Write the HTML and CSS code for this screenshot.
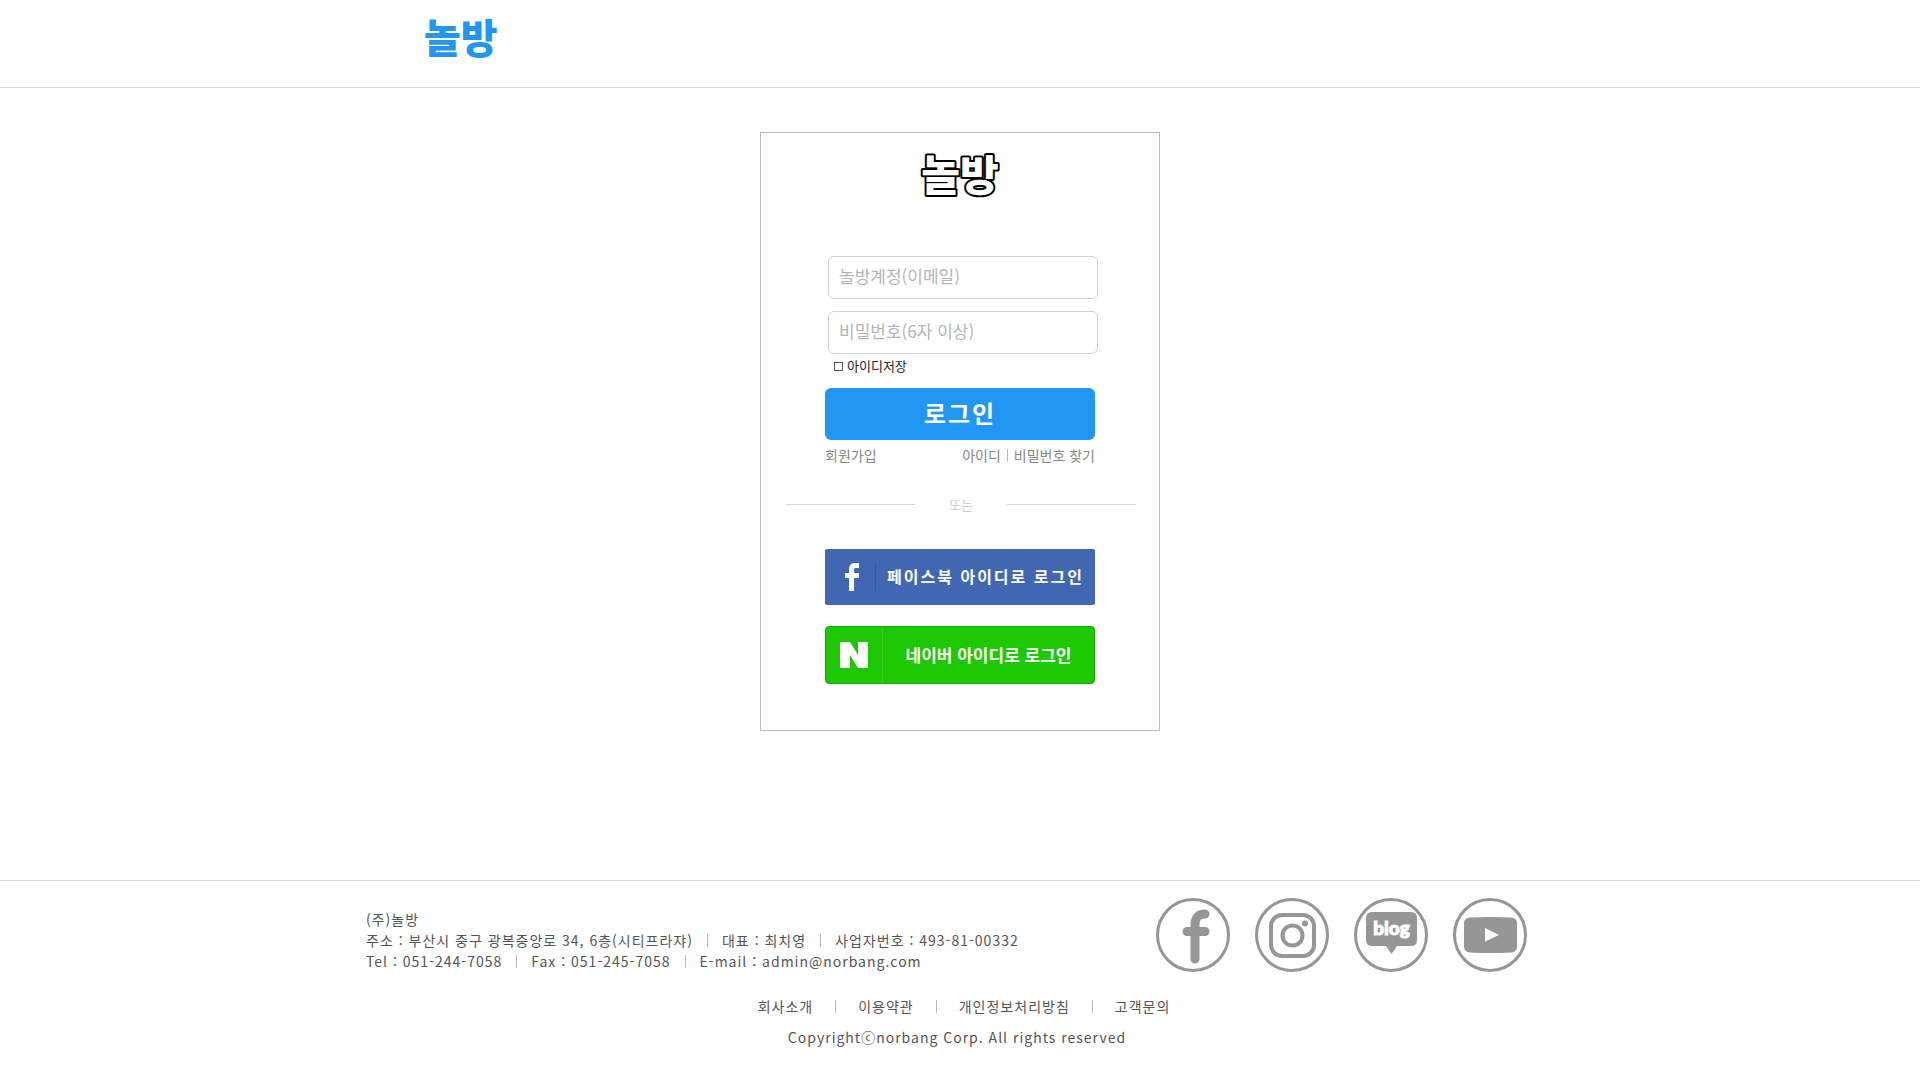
FILE: index.html
```html
<!DOCTYPE html>
<html lang="ko">
<head>
<meta charset="utf-8">
<meta name="viewport" content="width=device-width, initial-scale=1">
<title>놀방 로그인</title>
<link rel="stylesheet" href="styles.css">
</head>
<body>
<header class="header">
  <div class="header-inner"><a class="brand" href="#">놀방</a></div>
</header>

<main class="main">
  <form class="card">
    <h1 class="card-logo"><svg width="100" height="64" viewBox="0 0 100 64"><text x="50" y="46" text-anchor="middle">놀방</text></svg></h1>
    <div class="fields">
      <input class="field" type="email" placeholder="놀방계정(이메일)" aria-label="놀방계정(이메일)">
      <input class="field" type="password" placeholder="비밀번호(6자 이상)" aria-label="비밀번호(6자 이상)">
      <label class="remember"><input class="check" type="checkbox">아이디저장</label>
    </div>
    <button class="login" type="submit">로그인</button>
    <div class="links">
      <a href="#">회원가입</a>
      <span class="find"><a href="#">아이디</a><i class="bar"></i><a href="#">비밀번호 찾기</a></span>
    </div>
    <div class="or">또는</div>
    <button class="social facebook" type="button">
      <span class="facebook-icon"><svg width="14" height="28" viewBox="0 0 14 28" fill="#fff" aria-hidden="true"><path d="M4 28V15H0v-5h4V7c0-5 2-7 6-7h4v5h-3c-1.500 0-2 .6-2 2v3h5v5H9v13z"/></svg></span>
      <span class="facebook-label">페이스북 아이디로 로그인</span>
    </button>
    <button class="social naver" type="button">
      <span class="naver-icon"><svg width="28" height="26" viewBox="0 0 28 26" fill="#fff" aria-hidden="true"><path d="M0 0h10l8 13V0h10v26H18l-8-13v13H0z"/></svg></span>
      <span class="naver-label">네이버 아이디로 로그인</span>
    </button>
  </form>
</main>

<footer class="footer">
  <div class="footer-top">
    <address class="info">
      <div class="info-row">(주)놀방</div>
      <div class="info-row"><span>주소 : 부산시 중구 광복중앙로 34, 6층(시티프라쟈)</span><i class="bar"></i><span>대표 : 최치영</span><i class="bar"></i><span>사업자번호 : 493-81-00332</span></div>
      <div class="info-row"><span>Tel : 051-244-7058</span><i class="bar"></i><span>Fax : 051-245-7058</span><i class="bar"></i><span>E-mail : admin@norbang.com</span></div>
    </address>
    <nav class="sns" aria-label="SNS">
      <a href="#" aria-label="Facebook"><svg viewBox="0 0 74 74"><circle class="ring" cx="37" cy="37" r="35.500"/><path d="M39 61V27c0-7 3-11 10-11M31 33.500h18" fill="none" stroke="#969696" stroke-width="9" stroke-linecap="round"/></svg></a>
      <a href="#" aria-label="Instagram"><svg viewBox="0 0 74 74"><circle class="ring" cx="37" cy="37" r="35.500"/><rect x="16" y="17" width="43" height="41" rx="11" fill="none" stroke="#969696" stroke-width="4"/><circle cx="37.500" cy="37.500" r="10" fill="none" stroke="#969696" stroke-width="4"/><circle cx="50" cy="25.500" r="3" fill="#969696"/></svg></a>
      <a href="#" aria-label="Blog"><svg viewBox="0 0 74 74"><circle class="ring" cx="37" cy="37" r="35.500"/><path d="M18 14h39q6 0 6 6v22q0 6-6 6H43l-5.500 8L32 48H18q-6 0-6-6V20q0-6 6-6z" fill="#969696"/><text class="blog" x="37.500" y="37" text-anchor="middle">blog</text></svg></a>
      <a href="#" aria-label="YouTube"><svg viewBox="0 0 74 74"><circle class="ring" cx="37" cy="37" r="35.500"/><path d="M17 19.500q20-1 41 0 6 .5 6 6v23q0 5.500-6 6-21 1-41 0-6-.5-6-6v-23q0-5.500 6-6z" fill="#969696"/><path d="M32 30v13.500L46 37z" fill="#fff"/></svg></a>
    </nav>
  </div>
  <nav class="menu">
    <a href="#">회사소개</a><i class="bar"></i><a href="#">이용약관</a><i class="bar"></i><a href="#">개인정보처리방침</a><i class="bar"></i><a href="#">고객문의</a>
  </nav>
  <p class="copy">Copyrightⓒnorbang Corp. All rights reserved</p>
</footer>
</body>
</html>
```
FILE: styles.css
```css
* { box-sizing: border-box; }

body {
  margin: 0;
  background: #fff;
  color: #4a4a4a;
  font: 14px/21px "Noto Sans CJK KR", sans-serif;
}

a { color: inherit; text-decoration: none; }
svg { display: block; }
button { border: 0; padding: 0; color: #fff; font-family: inherit; cursor: pointer; }

.bar { flex: none; width: 1px; height: 13px; background: #bbb; }

.header { border-bottom: 1px solid #d5d5d5; }
.header-inner {
  max-width: 1200px;
  margin: 0 auto;
  padding: 12px 64px 27px;
}
.brand {
  display: block;
  width: fit-content;
  color: #2196f3;
  font-size: 40px;
  font-weight: 900;
  line-height: 48px;
}

.main { padding: 44px 16px 149px; }

.card {
  display: flex;
  flex-direction: column;
  max-width: 400px;
  margin: 0 auto;
  padding: 12px 64px 46px;
  border: 1px solid #bdbdbd;
}
.card-logo { margin: 0 0 47px; }
.card-logo svg { margin: 0 auto; overflow: visible; }
.card-logo text {
  fill: #fff;
  stroke: #000;
  stroke-width: 4px;
  stroke-linejoin: round;
  paint-order: stroke;
  font-size: 42px;
  font-weight: 900;
}

.fields {
  display: flex;
  flex-direction: column;
  margin: 0 -3px 0 3px;
}
.field {
  width: 100%;
  height: 43px;
  margin-bottom: 12px;
  padding: 0 10px 4px;
  border: 1px solid #d3d3d3;
  border-radius: 6px;
  font: 17px "Noto Sans CJK KR", sans-serif;
}
.field::placeholder { color: #b5b5b5; }
.field + .remember { margin-top: -10px; }
.remember {
  display: flex;
  align-items: center;
  gap: 4px;
  padding-left: 6px;
  color: #222;
  font-size: 13px;
  line-height: 20px;
}
.check {
  appearance: none;
  width: 9px;
  height: 9px;
  margin: 0;
  border: 1px solid #555;
}
.check:checked { background: #2196f3; }

.login {
  height: 52px;
  margin-top: 12px;
  padding-bottom: 4px;
  border-radius: 6px;
  background: #2196f3;
  font-size: 24px;
  font-weight: 700;
  letter-spacing: 2px;
}
.links {
  display: flex;
  justify-content: space-between;
  margin-top: 5px;
  color: #888;
}
.find { display: flex; align-items: center; gap: 6px; }

.or {
  display: flex;
  align-items: center;
  gap: 34px;
  margin: 28px -41px 34px -39px;
  color: #ccc;
  font-size: 13px;
}
.or::before, .or::after { content: ""; flex: 1; height: 1px; background: #d5d5d5; }

.social { display: flex; align-items: center; }
.facebook {
  height: 56px;
  border-radius: 2px;
  background: #4267b2;
}
.facebook-icon {
  padding: 0 16px 0 20px;
  border-right: 1px solid #365899;
}
.facebook-label {
  flex: 1;
  padding-bottom: 2px;
  font-size: 16px;
  font-weight: 700;
  letter-spacing: 2px;
}
.naver {
  height: 58px;
  margin-top: 21px;
  border: 1px solid #19a800;
  border-radius: 4px;
  background: #1ec800;
}
.naver-icon {
  display: flex;
  align-items: center;
  align-self: stretch;
  padding: 0 14px;
  border-right: 1px solid #3ace25;
}
.naver-label {
  flex: 1;
  padding-bottom: 2px;
  font-size: 17px;
  font-weight: 700;
}

.footer {
  padding: 17px 16px 30px;
  border-top: 1px solid #d5d5d5;
  color: #555;
  letter-spacing: 1px;
}
.footer-top {
  display: flex;
  justify-content: space-between;
  max-width: 1200px;
  margin: 0 auto;
  padding: 0 33px 0 6px;
}
.info { padding-top: 11px; font-style: normal; }
.info-row { display: flex; align-items: center; gap: 14px; }
.sns { display: flex; gap: 25px; }
.sns svg { width: 74px; height: 74px; }
.ring { fill: none; stroke: #969696; stroke-width: 3; }
.blog {
  fill: #fff;
  stroke: #fff;
  stroke-width: 1px;
  font: 900 19px Lato, sans-serif;
  letter-spacing: 0;
}
.menu {
  display: flex;
  align-items: center;
  justify-content: center;
  gap: 22px;
  margin-top: 24px;
  padding-left: 8px;
}
.copy { margin: 10px 0 0; padding-right: 6px; text-align: center; }
```
